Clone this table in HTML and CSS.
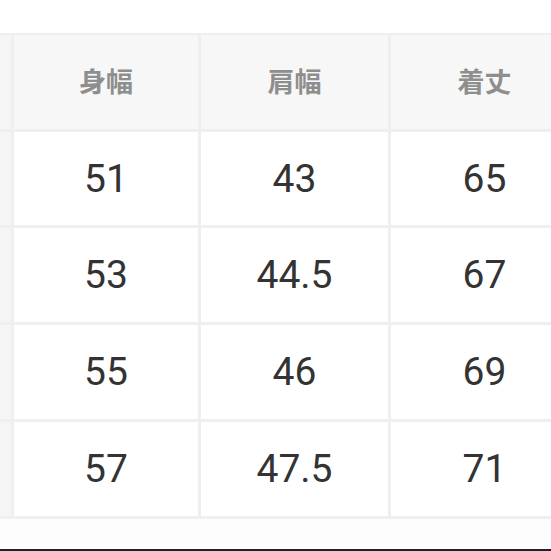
FILE: index.html
```html
<!DOCTYPE html>
<html lang="ja">
<head>
<meta charset="utf-8">
<link rel="stylesheet" href="styles.css">
</head>
<body>
<div class="page">
  <div class="top"></div>
  <div class="table">
    <div class="strip"></div>
    <div class="cell head">身幅</div>
    <div class="cell head">肩幅</div>
    <div class="cell head">着丈</div>
    <div class="strip"></div>

    <div class="strip"></div>
    <div class="cell">51</div>
    <div class="cell">43</div>
    <div class="cell">65</div>
    <div class="strip"></div>

    <div class="strip"></div>
    <div class="cell">53</div>
    <div class="cell">44.5</div>
    <div class="cell">67</div>
    <div class="strip"></div>

    <div class="strip"></div>
    <div class="cell">55</div>
    <div class="cell">46</div>
    <div class="cell">69</div>
    <div class="strip"></div>

    <div class="strip"></div>
    <div class="cell">57</div>
    <div class="cell">47.5</div>
    <div class="cell">71</div>
    <div class="strip"></div>
  </div>
  <div class="bottom"></div>
  <div class="bar"></div>
</div>
</body>
</html>
```
FILE: styles.css
```css
html, body {
  margin: 0;
  padding: 0;
  background: #ffffff;
}
.page {
  width: 551px;
  height: 551px;
  overflow: hidden;
  display: flex;
  flex-direction: column;
}
.top {
  height: 33px;
  flex: none;
  background: #ffffff;
}
.table {
  flex: none;
  display: grid;
  grid-template-columns: 11px 184px 187px 187px 40px;
  grid-template-rows: 94px 93px 94px 94px 94px;
  gap: 3px;
  padding: 2px 0 3px 0;
  width: 630px;
  background: #efefef;
}
.strip {
  background: #f5f5f5;
}
.cell {
  background: #ffffff;
  display: flex;
  align-items: center;
  justify-content: center;
  font-family: Roboto, "Noto Sans", sans-serif;
  font-size: 39px;
  color: #333333;
}
.cell.head {
  background: #f7f7f7;
  font-family: "Noto Sans CJK JP", "Noto Sans CJK SC", sans-serif;
  font-weight: 700;
  font-size: 27px;
  color: #8e8e8e;
  padding-bottom: 4px;
}
.bottom {
  flex: 1;
  background: #fdfdfd;
}
.bar {
  flex: none;
  height: 2px;
  background: #222222;
}
```
